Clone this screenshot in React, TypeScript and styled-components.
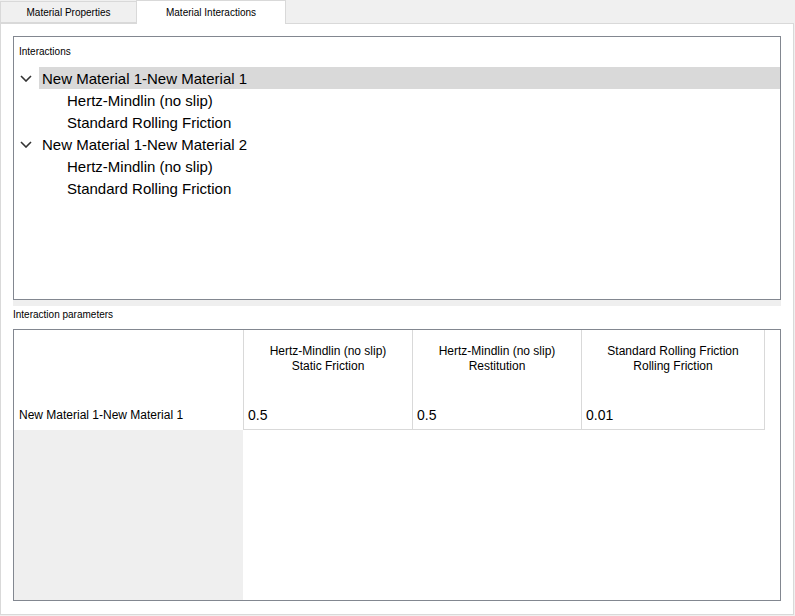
import styled, { createGlobalStyle } from "styled-components";

const GlobalStyle = createGlobalStyle`
  html, body {
    margin: 0;
    padding: 0;
    background: #f0f0f0;
    font-family: "Liberation Sans", Arial, sans-serif;
    color: #000;
  }
`;

const Window = styled.div`
  width: 795px;
  height: 616px;
  background: #f0f0f0;
  overflow: hidden;
`;

const TabBar = styled.div`
  display: flex;
  align-items: flex-end;
  height: 24px;
  position: relative;
  z-index: 1;
`;

const Tab = styled.div<{ $active?: boolean }>`
  box-sizing: border-box;
  display: flex;
  align-items: center;
  justify-content: center;
  font-size: 10px;
  border: 1px solid #d9d9d9;
  ${(p) =>
    p.$active
      ? `
    width: 150px;
    height: 24px;
    margin-left: -1px;
    background: #fff;
    border-bottom: none;
    padding-bottom: 1px;
  `
      : `
    width: 137px;
    height: 22px;
    margin-bottom: 1px;
    background: #f0f0f0;
  `}
`;

const Pane = styled.div`
  box-sizing: border-box;
  width: 794px;
  height: 592px;
  margin-top: -1px;
  background: #fff;
  border: 1px solid #d9d9d9;
  padding: 12px 12px 0 12px;
`;

const GroupBox = styled.div`
  box-sizing: border-box;
  height: 264px;
  border: 1px solid #828790;
  padding-top: 8px;
`;

const SmallLabel = styled.div<{ $indent?: number }>`
  font-size: 10px;
  line-height: 14px;
  padding-left: ${(p) => p.$indent ?? 0}px;
`;

const Tree = styled.div`
  margin-top: 8px;
`;

const TreeRow = styled.div<{ $child?: boolean; $selected?: boolean }>`
  display: flex;
  align-items: center;
  height: 22px;
  font-size: 15px;
  margin-left: ${(p) => (p.$child ? 53 : 25)}px;
  padding-left: ${(p) => (p.$child ? 0 : 3)}px;
  background: ${(p) => (p.$selected ? "#d9d9d9" : "transparent")};
  position: relative;
`;

const Chevron = styled.svg`
  position: absolute;
  left: -19px;
  top: 8px;
`;

const Splitter = styled.div`
  height: 6px;
  background: #efefef;
`;

const ParamsLabel = styled(SmallLabel)`
  margin-top: 2px;
`;

const TableFrame = styled.div`
  box-sizing: border-box;
  margin-top: 7px;
  height: 272px;
  border: 1px solid #828790;
  display: grid;
  grid-template-columns: 229px 169px 169px 184px 1fr;
  grid-template-rows: 70px 30px 1fr;
`;

const HeaderCell = styled.div<{ $last?: boolean }>`
  border-left: 1px solid #d9d9d9;
  border-right: ${(p) => (p.$last ? "1px solid #d9d9d9" : "none")};
  font-size: 12px;
  line-height: 15px;
  text-align: center;
  padding-top: 14px;
`;

const RowHeader = styled.div`
  display: flex;
  align-items: center;
  padding-left: 5px;
  font-size: 12px;
`;

const DataCell = styled.div<{ $last?: boolean }>`
  display: flex;
  align-items: center;
  padding-left: 4px;
  font-size: 14px;
  border-left: 1px solid #d9d9d9;
  border-right: ${(p) => (p.$last ? "1px solid #d9d9d9" : "none")};
  border-bottom: 1px solid #d9d9d9;
`;

const Blank = styled.div<{ $gray?: boolean }>`
  background: ${(p) => (p.$gray ? "#efefef" : "#fff")};
`;

const ChevronIcon = () => (
  <Chevron width="12" height="7" viewBox="0 0 12 7">
    <path d="M1 1 L6 6 L11 1" fill="none" stroke="#333" strokeWidth="1.6" />
  </Chevron>
);

const groups = [
  { name: "New Material 1-New Material 1", selected: true },
  { name: "New Material 1-New Material 2", selected: false },
];

const models = ["Hertz-Mindlin (no slip)", "Standard Rolling Friction"];

const columns = [
  { model: "Hertz-Mindlin (no slip)", param: "Static Friction", value: "0.5" },
  { model: "Hertz-Mindlin (no slip)", param: "Restitution", value: "0.5" },
  { model: "Standard Rolling Friction", param: "Rolling Friction", value: "0.01" },
];

export default function App() {
  return (
    <Window>
      <GlobalStyle />
      <TabBar>
        <Tab>Material Properties</Tab>
        <Tab $active>Material Interactions</Tab>
      </TabBar>
      <Pane>
        <GroupBox>
          <SmallLabel $indent={5}>Interactions</SmallLabel>
          <Tree>
            {groups.map((g) => (
              <div key={g.name}>
                <TreeRow $selected={g.selected}>
                  <ChevronIcon />
                  {g.name}
                </TreeRow>
                {models.map((m) => (
                  <TreeRow $child key={g.name + m}>
                    {m}
                  </TreeRow>
                ))}
              </div>
            ))}
          </Tree>
        </GroupBox>
        <Splitter />
        <ParamsLabel>Interaction parameters</ParamsLabel>
        <TableFrame>
          <Blank />
          {columns.map((c, i) => (
            <HeaderCell key={"h" + i} $last={i === columns.length - 1}>
              {c.model}
              <br />
              {c.param}
            </HeaderCell>
          ))}
          <Blank />
          <RowHeader>New Material 1-New Material 1</RowHeader>
          {columns.map((c, i) => (
            <DataCell key={"d" + i} $last={i === columns.length - 1}>
              {c.value}
            </DataCell>
          ))}
          <Blank />
          <Blank $gray />
          <Blank />
        </TableFrame>
      </Pane>
    </Window>
  );
}
